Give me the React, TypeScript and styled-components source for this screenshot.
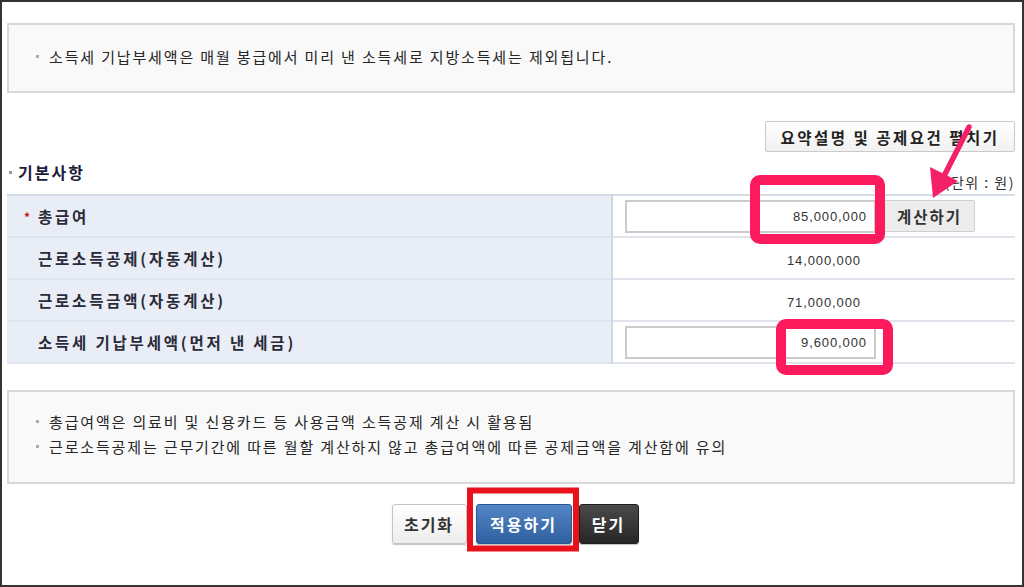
import React from "react";
import styled, { createGlobalStyle } from "styled-components";

const Global = createGlobalStyle`
  html, body { margin: 0; padding: 0; background: #fff; }
  * { box-sizing: border-box; }
  body { font-family: "Noto Sans CJK KR", "Liberation Sans", sans-serif; color: #333; }
`;

const Frame = styled.div`
  position: relative;
  width: 1024px;
  height: 587px;
  border: 2px solid #333;
  padding: 0 7px 0 5px;
  background: #fff;
  overflow: hidden;
`;

const InfoBox = styled.div<{ $h: number; $mt: number; $pt: number }>`
  margin-top: ${(p) => p.$mt}px;
  height: ${(p) => p.$h}px;
  border: 2px solid #d8d8d8;
  background: #f9f9f9;
  padding: ${(p) => p.$pt}px 0 0 26px;
`;

const Note = styled.div`
  position: relative;
  padding-left: 14px;
  font-size: 15px;
  line-height: 25px;
  color: #262626;
  letter-spacing: 1.85px;
  white-space: nowrap;
  &::before {
    content: "";
    position: absolute;
    left: 1px;
    top: 11px;
    width: 3px;
    height: 3px;
    background: #aaa;
  }
`;

const ToolRow = styled.div`
  margin-top: 28px;
  display: flex;
  justify-content: flex-end;
`;

const ToggleButton = styled.button`
  width: 250px;
  height: 31px;
  border: 1px solid #c9c9c9;
  border-radius: 2px;
  background: linear-gradient(#ffffff, #f1f1f1);
  font-family: inherit;
  font-weight: 700;
  font-size: 15.5px;
  letter-spacing: 2.5px;
  color: #222;
  padding: 0;
  white-space: nowrap;
`;

const SectionHead = styled.div`
  height: 42px;
  display: flex;
  justify-content: space-between;
  align-items: flex-end;
`;

const SectionTitle = styled.div`
  position: relative;
  margin: 0 0 12px 0;
  padding-left: 11px;
  font-size: 16px;
  line-height: 20px;
  font-weight: 700;
  color: #1c1c38;
  letter-spacing: 2px;
  &::before {
    content: "";
    position: absolute;
    left: 2px;
    top: 9px;
    width: 3px;
    height: 3px;
    background: #999;
  }
`;

const Unit = styled.div`
  margin-bottom: 4px;
  font-size: 14px;
  line-height: 16px;
  color: #333;
  letter-spacing: 1.5px;
  white-space: nowrap;
`;

const Table = styled.table`
  width: 100%;
  border-collapse: collapse;
  border-top: 2px solid #d5dce7;
`;

const Row = styled.tr`
  height: 42px;
  border-bottom: 2px solid #dfe4ec;
`;

const Label = styled.th`
  width: 605px;
  background: #e9eef6;
  border-right: 2px solid #cfd7e3;
  text-align: left;
  padding: 0 0 0 17px;
  font-size: 15.5px;
  font-weight: 700;
  color: #2a2a38;
  letter-spacing: 2.8px;
  white-space: nowrap;
`;

const Star = styled.span`
  display: inline-block;
  width: 14px;
  color: #d0101a;
  font-size: 12px;
  font-weight: 700;
  vertical-align: 1px;
`;

const Value = styled.td`
  padding: 0 0 0 12px;
  white-space: nowrap;
`;

const ValueText = styled.span`
  display: inline-block;
  width: 251px;
  padding-right: 15px;
  text-align: right;
  font-family: "Liberation Sans", sans-serif;
  font-size: 13px;
  letter-spacing: 0.9px;
  color: #333;
`;

const Field = styled.input`
  width: 251px;
  height: 33px;
  border: 2px solid #cbcbcb;
  background: #fff;
  padding: 0 7px 0 0;
  text-align: right;
  font-family: "Liberation Sans", sans-serif;
  font-size: 13px;
  letter-spacing: 0.9px;
  color: #333;
  vertical-align: middle;
  outline: none;
`;

const CalcButton = styled.button`
  margin-left: 8px;
  width: 91px;
  height: 32px;
  border: 1px solid #cfcfcf;
  border-radius: 2px;
  background: #ececec;
  font-family: inherit;
  font-size: 15.5px;
  font-weight: 700;
  color: #333;
  letter-spacing: 2px;
  padding: 0;
  vertical-align: middle;
`;

const ActionRow = styled.div`
  margin-top: 20px;
  display: flex;
  justify-content: center;
  padding-left: 8px;
`;

const ActionButton = styled.button<{ $kind: "plain" | "primary" | "dark"; $w: number; $ml: number }>`
  width: ${(p) => p.$w}px;
  height: 40px;
  margin-left: ${(p) => p.$ml}px;
  border-radius: 3px;
  padding: 0;
  font-family: inherit;
  font-size: 16px;
  font-weight: 700;
  letter-spacing: 2px;
  white-space: nowrap;
  border: 1px solid
    ${(p) => (p.$kind === "plain" ? "#c4c4c4" : p.$kind === "primary" ? "#2c5690" : "#1e1e1e")};
  color: ${(p) => (p.$kind === "plain" ? "#333" : "#fff")};
  background: ${(p) =>
    p.$kind === "plain"
      ? "linear-gradient(#ffffff, #ececec)"
      : p.$kind === "primary"
      ? "linear-gradient(#5386c6, #2f609f)"
      : "linear-gradient(#4a4a4a, #262626)"};
  box-shadow: 0 1px 1px rgba(0, 0, 0, 0.25);
`;

const Overlay = styled.svg`
  position: absolute;
  left: -2px;
  top: -2px;
  width: 1024px;
  height: 587px;
  pointer-events: none;
`;

export default function App() {
  return (
    <>
      <Global />
      <Frame>
        <InfoBox $mt={21} $h={70} $pt={19}>
          <Note>소득세 기납부세액은 매월 봉급에서 미리 낸 소득세로 지방소득세는 제외됩니다.</Note>
        </InfoBox>

        <ToolRow>
          <ToggleButton>요약설명 및 공제요건 펼치기</ToggleButton>
        </ToolRow>

        <SectionHead>
          <SectionTitle>기본사항</SectionTitle>
          <Unit>(단위 : 원)</Unit>
        </SectionHead>

        <Table>
          <tbody>
            <Row>
              <Label>
                <Star>*</Star>총급여
              </Label>
              <Value>
                <Field defaultValue="85,000,000" />
                <CalcButton>계산하기</CalcButton>
              </Value>
            </Row>
            <Row>
              <Label>
                <Star />근로소득공제(자동계산)
              </Label>
              <Value>
                <ValueText>14,000,000</ValueText>
              </Value>
            </Row>
            <Row>
              <Label>
                <Star />근로소득금액(자동계산)
              </Label>
              <Value>
                <ValueText>71,000,000</ValueText>
              </Value>
            </Row>
            <Row>
              <Label>
                <Star />소득세 기납부세액(먼저 낸 세금)
              </Label>
              <Value>
                <Field defaultValue="9,600,000" />
              </Value>
            </Row>
          </tbody>
        </Table>

        <InfoBox $mt={26} $h={94} $pt={17}>
          <Note>총급여액은 의료비 및 신용카드 등 사용금액 소득공제 계산 시 활용됨</Note>
          <Note>근로소득공제는 근무기간에 따른 월할 계산하지 않고 총급여액에 따른 공제금액을 계산함에 유의</Note>
        </InfoBox>

        <ActionRow>
          <ActionButton $kind="plain" $w={75} $ml={0}>초기화</ActionButton>
          <ActionButton $kind="primary" $w={96} $ml={9}>적용하기</ActionButton>
          <ActionButton $kind="dark" $w={60} $ml={7}>닫기</ActionButton>
        </ActionRow>

        <Overlay viewBox="0 0 1024 587">
          <rect x="755" y="180" width="125" height="59" rx="5" fill="none" stroke="#fb1a5c" strokeWidth="10" />
          <rect x="781" y="324" width="107" height="46" rx="5" fill="none" stroke="#fb1a5c" strokeWidth="10" />
          <rect x="470" y="490.5" width="106" height="58" fill="none" stroke="#e8121c" strokeWidth="6" />
          <line x1="969" y1="127" x2="942" y2="180" stroke="#f5206a" strokeWidth="5.5" strokeLinecap="round" />
          <polygon points="933,198 930,167 958,181" fill="#f5206a" />
        </Overlay>
      </Frame>
    </>
  );
}
